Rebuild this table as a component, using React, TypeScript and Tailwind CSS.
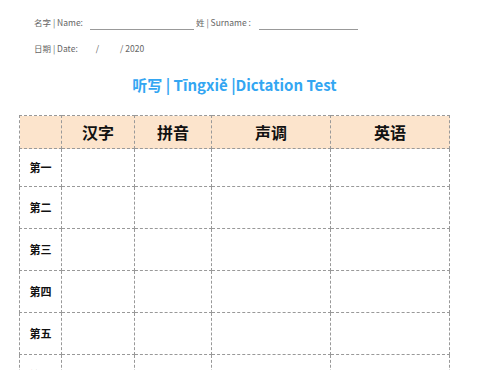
import React from "react";

const cjk = { fontFamily: '"Noto Sans CJK SC", "Noto Sans", sans-serif' };

export default function App() {
  const rows = ["第一", "第二", "第三", "第四", "第五", "第六"];
  const heights = ["h-[38px]", "h-[42px]", "h-[42px]", "h-[42px]", "h-[42px]", "h-[42px]"];
  return (
    <div className="w-[483px] h-[370px] overflow-hidden bg-white" style={cjk}>
      <div className="pl-[34px] pt-[14px] text-[8.5px] text-[#666] leading-[16px]">
        <div className="flex items-end h-[16px]">
          <span>名字 | Name:</span>
          <span className="ml-[7px] w-[104px] border-b border-[#999] h-[12px]"></span>
          <span className="ml-[2px]">姓 | Surname :</span>
          <span className="ml-[8px] w-[99px] border-b border-[#999] h-[12px]"></span>
        </div>
        <div className="flex items-end h-[16px] mt-[10px]">
          <span>日期 | Date:</span>
          <span className="ml-[18px]">/</span>
          <span className="ml-[21px]">/ 2020</span>
        </div>
      </div>
      <div className="mt-[18px] text-center text-[15px] font-semibold text-[#33a6f2] leading-[22px] pr-[14px]">
        听写 | Tīngxiě |Dictation Test
      </div>
      <table className="ml-[19px] mt-[19px] border-collapse table-fixed w-[431px]">
        <colgroup>
          <col className="w-[42px]" />
          <col className="w-[73px]" />
          <col className="w-[77px]" />
          <col className="w-[119px]" />
          <col className="w-[119px]" />
        </colgroup>
        <thead>
          <tr className="h-[33px] bg-[#fce4cc]">
            <th className="border border-dashed border-[#999]"></th>
            {["汉字", "拼音", "声调", "英语"].map((h) => (
              <th key={h} className="border border-dashed border-[#999] text-[16px] font-bold text-[#111] text-center p-0">
                {h}
              </th>
            ))}
          </tr>
        </thead>
        <tbody>
          {rows.map((r, i) => (
            <tr key={r} className={heights[i]}>
              <td className="border border-dashed border-[#999] text-[11px] font-bold text-[#111] text-center p-0">{r}</td>
              <td className="border border-dashed border-[#999]"></td>
              <td className="border border-dashed border-[#999]"></td>
              <td className="border border-dashed border-[#999]"></td>
              <td className="border border-dashed border-[#999]"></td>
            </tr>
          ))}
        </tbody>
      </table>
    </div>
  );
}
